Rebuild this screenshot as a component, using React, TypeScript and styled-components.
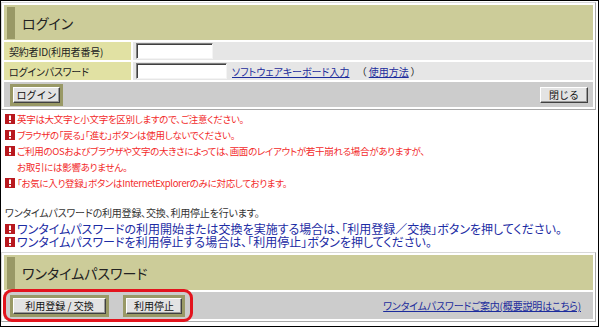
import React from "react";
import styled, { createGlobalStyle } from "styled-components";

const Global = createGlobalStyle`
  html, body { margin: 0; padding: 0; background: #fff; }
  body {
    font-family: "Noto Sans CJK JP", "Noto Sans", sans-serif;
    font-feature-settings: "palt";
    -webkit-font-smoothing: antialiased;
  }
`;

const Frame = styled.div`
  position: relative;
  box-sizing: border-box;
  width: 599px;
  height: 327px;
  border: 1px solid #000;
  padding: 0 2px 0 0;
  overflow: hidden;
  display: flex;
  flex-direction: column;
`;

const Panel = styled.div<{ $mt: number }>`
  margin-top: ${(p) => p.$mt}px;
  border: 1px solid;
  border-color: #d8d8d8 #a8a8a8 #a8a8a8 #d8d8d8;
  padding: 2px;
  display: grid;
  grid-template-columns: 127px 1fr;
  gap: 2px;
  background: #fff;
`;

const Header = styled.div`
  grid-column: 1 / -1;
  height: 35px;
  background: #cccc99;
  display: flex;
  align-items: stretch;
`;

const HeaderBar = styled.span`
  width: 8px;
  margin: 2px 0 1px 3px;
  background: #999966;
`;

const HeaderTitle = styled.span`
  align-self: center;
  margin-left: 7px;
  font-size: 14px;
  color: #222;
  line-height: 1;
`;

const Label = styled.div`
  height: 18px;
  background: #e1e1a3;
  font-size: 10px;
  letter-spacing: -0.2px;
  color: #222;
  display: flex;
  align-items: center;
  padding-left: 5px;
`;

const Value = styled.div`
  height: 18px;
  background: #e6e6e6;
  display: flex;
  align-items: center;
  padding-left: 3px;
  font-size: 10px;
  color: #222;
`;

const TextInput = styled.input<{ $w: number }>`
  box-sizing: border-box;
  width: ${(p) => p.$w}px;
  height: 16px;
  margin: 0;
  padding: 0;
  background: #fff;
  border: 1px solid;
  border-color: #808080 #f4f4f4 #f4f4f4 #808080;
  box-shadow: inset 1px 1px 0 #404040;
  outline: none;
`;

const Link = styled.a`
  color: #1c2c9c;
  text-decoration: underline;
  cursor: pointer;
`;

const KbLink = styled(Link)`
  margin-left: 5px;
`;

const Paren = styled.span<{ $ml: number }>`
  margin-left: ${(p) => p.$ml}px;
  white-space: pre;
`;

const ButtonRow = styled.div<{ $h: number; $pr: number; $gap: number }>`
  grid-column: 1 / -1;
  height: ${(p) => p.$h}px;
  background: #cccccc;
  display: flex;
  align-items: center;
  padding: 0 ${(p) => p.$pr}px 0 6px;
  gap: ${(p) => p.$gap}px;
`;

const Spacer = styled.span`
  flex: 1;
`;

const OliveFrame = styled.span`
  display: inline-flex;
  padding: 3px;
  background: #999966;
`;

const Btn = styled.button<{ $w: number }>`
  box-sizing: border-box;
  width: ${(p) => p.$w}px;
  height: 16px;
  margin: 0;
  padding: 0;
  background: #e3e3e3;
  border: 1px solid;
  border-color: #ffffff #404040 #404040 #ffffff;
  box-shadow: inset -1px -1px 0 #9a9a9a;
  font-family: inherit;
  font-size: 10px;
  color: #111;
  line-height: 1;
  white-space: pre;
  cursor: pointer;
`;

const SmallLink = styled(Link)`
  font-size: 10px;
  letter-spacing: -0.15px;
`;

const Notes = styled.div`
  margin-top: 1px;
  padding-left: 4px;
  display: flex;
  flex-direction: column;
`;

const Note = styled.div<{ $size: number; $lh: number; $ls: number; $color: string }>`
  display: flex;
  align-items: flex-start;
  font-size: ${(p) => p.$size}px;
  letter-spacing: ${(p) => p.$ls}px;
  line-height: ${(p) => p.$lh}px;
  color: ${(p) => p.$color};
`;

const IconWrap = styled.span<{ $top: number }>`
  display: inline-flex;
  flex: none;
  width: 11px;
  margin-top: ${(p) => p.$top}px;
  margin-right: 1px;
`;

const Plain = styled.div`
  margin-top: 14px;
  padding-left: 4px;
  font-size: 10px;
  letter-spacing: -0.2px;
  line-height: 16px;
  color: #333;
`;

const BlueNotes = styled.div`
  margin-top: 1px;
  padding-left: 4px;
  display: flex;
  flex-direction: column;
`;

const Highlight = styled.div`
  position: absolute;
  left: 2px;
  top: 288px;
  width: 190px;
  height: 33px;
  box-sizing: border-box;
  border: 3px solid #e3141e;
  border-radius: 9px;
  pointer-events: none;
`;

const Warn: React.FC<{ top: number }> = ({ top }) => (
  <IconWrap $top={top}>
    <svg width="10" height="10" viewBox="0 0 10 10">
      <rect x="0" y="0" width="10" height="10" fill="#b8181e" />
      <rect x="4" y="1.5" width="2" height="4.5" fill="#fff" />
      <rect x="4" y="7" width="2" height="1.7" fill="#fff" />
    </svg>
  </IconWrap>
);

const RED = "#f22a2a";
const BLUE = "#1c2ca4";

export default function App() {
  return (
    <>
      <Global />
      <Frame>
        <Panel $mt={1}>
          <Header>
            <HeaderBar />
            <HeaderTitle>ログイン</HeaderTitle>
          </Header>
          <Label>契約者ID(利用者番号)</Label>
          <Value>
            <TextInput $w={77} />
          </Value>
          <Label>ログインパスワード</Label>
          <Value>
            <TextInput $w={91} type="password" />
            <KbLink>ソフトウェアキーボード入力</KbLink>
            <Paren $ml={12}>（ </Paren>
            <Link>使用方法</Link>
            <Paren $ml={0}> ）</Paren>
          </Value>
          <ButtonRow $h={25} $pr={5} $gap={15}>
            <OliveFrame>
              <Btn $w={47}>ログイン</Btn>
            </OliveFrame>
            <Spacer />
            <Btn $w={48}>閉じる</Btn>
          </ButtonRow>
        </Panel>

        <Notes>
          <Note $size={9.5} $ls={-0.3} $lh={16} $color={RED}>
            <Warn top={3} />
            <span>英字は大文字と小文字を区別しますので、ご注意ください。</span>
          </Note>
          <Note $size={9.5} $ls={-0.3} $lh={16} $color={RED}>
            <Warn top={3} />
            <span>ブラウザの「戻る」「進む」ボタンは使用しないでください。</span>
          </Note>
          <Note $size={9.5} $ls={-0.3} $lh={16} $color={RED}>
            <Warn top={3} />
            <span>
              ご利用のOSおよびブラウザや文字の大きさによっては、画面のレイアウトが若干崩れる場合がありますが、
              <br />
              お取引には影響ありません。
            </span>
          </Note>
          <Note $size={9.5} $ls={-0.3} $lh={16} $color={RED}>
            <Warn top={3} />
            <span>「お気に入り登録」ボタンはInternetExplorerのみに対応しております。</span>
          </Note>
        </Notes>

        <Plain>ワンタイムパスワードの利用登録、交換、利用停止を行います。</Plain>

        <BlueNotes>
          <Note $size={12} $ls={0} $lh={13} $color={BLUE}>
            <Warn top={2} />
            <span>ワンタイムパスワードの利用開始または交換を実施する場合は、「利用登録／交換」ボタンを押してください。</span>
          </Note>
          <Note $size={12} $ls={0} $lh={13} $color={BLUE}>
            <Warn top={2} />
            <span>ワンタイムパスワードを利用停止する場合は、「利用停止」ボタンを押してください。</span>
          </Note>
        </BlueNotes>

        <Panel $mt={4}>
          <Header>
            <HeaderBar />
            <HeaderTitle>ワンタイムパスワード</HeaderTitle>
          </Header>
          <ButtonRow $h={27} $pr={12} $gap={14}>
            <OliveFrame>
              <Btn $w={93}>利用登録 / 交換</Btn>
            </OliveFrame>
            <OliveFrame>
              <Btn $w={56}>利用停止</Btn>
            </OliveFrame>
            <Spacer />
            <SmallLink>ワンタイムパスワードご案内(概要説明はこちら)</SmallLink>
          </ButtonRow>
        </Panel>
        <Highlight />
      </Frame>
    </>
  );
}
